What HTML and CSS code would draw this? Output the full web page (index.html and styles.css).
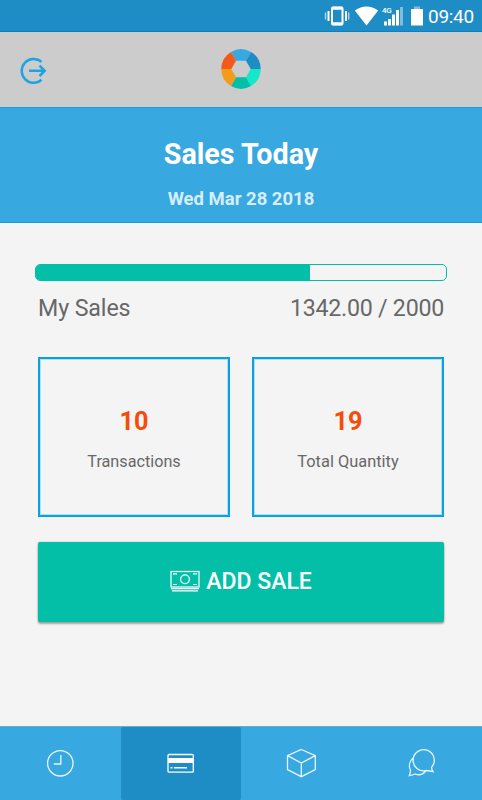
FILE: index.html
```html
<!DOCTYPE html>
<html lang="en">
<head>
<meta charset="utf-8">
<title>Sales Today</title>
<link rel="stylesheet" href="styles.css">
</head>
<body>
<div class="app">
  <div class="status">
    <svg class="status-icons" width="112" height="32" viewBox="312 0 112 32">
      <rect x="332" y="7.5" width="10.5" height="17" rx="1" fill="none" stroke="#fff" stroke-width="2"/>
      <path d="M332 8.2h10.500M332 23.800h10.500" stroke="#fff" stroke-width="3"/>
      <path d="M328.500 11v10M346 11v10" stroke="#fff" stroke-width="2"/>
      <path d="M325.500 12.500v7M348.700 12.500v7" stroke="#b9dcee" stroke-width="1.300"/>
      <path d="M366.500 25.500 354.800 10.500Q366.500 2.500 378.200 10.500Z" fill="#fff"/>
      <path d="M384 21.500h3v4h-3zM388 19h3v6.500h-3zM392 14.500h3v11h-3zM396 10h3v15.500h-3z" fill="#fff"/>
      <path d="M400 7h3v18.500h-3z" fill="#7fbddf"/>
      <path d="M411 9h12v16.500h-12z" fill="#fff"/>
      <path d="M414 6.500h6v2.500h-6z" fill="#7fbddf"/>
      <text x="382" y="13" class="network">4G</text>
    </svg>
    <span class="time">09:40</span>
  </div>
  <header class="topbar">
    <svg class="exit" width="28" height="28" viewBox="19 57 28 28" fill="none" stroke="#20a3e2" stroke-width="2.500">
      <path d="M41.500 61.900A11.900 11.900 0 1 0 41.500 79.700M29 70.800H44.500M39.500 65.600l5.200 5.200-5.200 5.200"/>
    </svg>
    <svg class="logo" width="42" height="42" viewBox="-21 -21 42 42">
      <path d="M-10-17A19.700 19.700 0 0 1 10-17L5-8.200H-5Z" fill="#37a8e0"/>
      <path d="M10-17A19.700 19.700 0 0 1 19.700 0H9.700L5-8.200Z" fill="#1e8dc6"/>
      <path d="M19.700 0A19.700 19.700 0 0 1 10 17L5 8.300 9.700 0Z" fill="#11e8cc"/>
      <path d="M10 17A19.700 19.700 0 0 1-10 17L-5 8.300H5Z" fill="#04bfa8"/>
      <path d="M-10 17A19.700 19.700 0 0 1-19.700 0H-9.700L-5 8.300Z" fill="#f39c1b"/>
      <path d="M-19.700 0A19.700 19.700 0 0 1-10-17L-5-8.200-9.700 0Z" fill="#f25a19"/>
    </svg>
  </header>
  <section class="hero">
    <h1 class="title">Sales Today</h1>
    <p class="date">Wed Mar 28 2018</p>
  </section>
  <main class="content">
    <div class="progress"><div class="progress-fill"></div></div>
    <div class="summary"><span class="label">My Sales</span><span class="amount">1342.00 / 2000</span></div>
    <div class="cards">
      <div class="card"><strong class="count">10</strong><span class="caption">Transactions</span></div>
      <div class="card"><strong class="count">19</strong><span class="caption quantity">Total Quantity</span></div>
    </div>
    <button class="add">
      <svg width="30" height="22" viewBox="0 0 30 22" fill="none" stroke="#fff" stroke-width="1.200">
        <rect x="1" y="1.500" width="28" height="15.500"/>
        <circle cx="15" cy="9.200" r="4.400"/>
        <path d="M3 3.800h4M23 3.800h4M3 14.500h4M23 14.500h4M1 18.700h28M2 20.900h26"/>
      </svg>
      <span>ADD SALE</span>
    </button>
  </main>
  <nav class="tabs">
    <div class="tab">
      <svg width="30" height="30" viewBox="45 748 30 30"><circle cx="60.300" cy="763.300" r="12.700"/><path d="M60.800 755v9h-7"/></svg>
    </div>
    <div class="tab active">
      <svg width="30" height="30" viewBox="166 748 30 30"><rect x="168" y="754.500" width="25.300" height="17.700" rx="1"/><path d="M168 760.500h25.300" stroke-width="5"/><path d="M170.500 767.700h2M174 767.700h13" stroke-width="1.400"/></svg>
    </div>
    <div class="tab">
      <svg width="30" height="30" viewBox="286 748 30 30"><path d="M301.300 749.500 315.300 755.600V769.700L301.300 776.700 287.500 769.700V755.600ZM287.500 755.600 301.300 763 315.300 755.600M301.300 763V776.700"/></svg>
    </div>
    <div class="tab">
      <svg width="30" height="30" viewBox="407.500 748 30 30"><path d="M432.200 767.200A10.600 10.600 0 1 0 427 770.500Q430 771 433.500 771.700 432 769.500 432.200 767.200ZM413.300 758.300A10 10 0 0 0 411 770.200Q411 773.500 409.800 775.700 413 775.200 415.500 774Q422 776.500 426.200 771"/></svg>
    </div>
  </nav>
</div>
</body>
</html>
```
FILE: styles.css
```css
* { box-sizing: border-box; }
body { margin: 0; font-family: Roboto, sans-serif; }
.app { width: 482px; height: 800px; display: flex; flex-direction: column; background: #f4f4f4; overflow: hidden; }
.status { height: 32px; background: #1e8dc6; border-bottom: 1px solid #0e80bd; display: flex; justify-content: flex-end; align-items: flex-start; padding-right: 8px; color: #fff; }
.status-icons { margin-right: 4px; }
.network { font: 500 8px Roboto, sans-serif; fill: #fff; letter-spacing: -.3px; }
.time { width: 46px; white-space: nowrap; font-size: 19px; line-height: 34px; letter-spacing: -.3px; }
.topbar { height: 75px; background: #ccc; display: grid; grid-template-columns: 1fr 42px 1fr; align-items: center; }
.exit { margin-left: 18.500px; margin-top: 3px; }
.logo { margin-top: -1px; }
.hero { height: 116px; background: #37a8e0; border-top: 1px solid #159fe0; border-bottom: 1px solid #109ee0; text-align: center; color: #fff; padding-top: 29px; }
.title { margin: 0; font-size: 28.700px; line-height: 34px; font-weight: 700; }
.date { margin: 17px 0 0; font-size: 18.5px; line-height: 22px; font-weight: 700; color: #d7eefa; }
.content { flex: 1; padding: 41px 38px 0; color: #686868; }
.progress { height: 17px; margin: 0 -3px; border: 1px solid #04bfa8; border-radius: 5px; overflow: hidden; }
.progress-fill { width: 66.800%; height: 100%; background: #04bfa8; }
.summary { display: flex; justify-content: space-between; height: 28px; line-height: 28px; margin-top: 13px; font-size: 23.200px; }
.label { letter-spacing: -.1px; }
.amount { letter-spacing: -.25px; }
.cards { display: grid; grid-template-columns: 1fr 1fr; gap: 22px; margin-top: 35px; }
.card { height: 160px; border: 2px solid #07a2e2; outline: 1px solid #b5dcf0; outline-offset: -3px; display: flex; flex-direction: column; align-items: center; padding-top: 48px; }
.count { font-size: 25.300px; line-height: 30px; font-weight: 700; color: #f64c0b; }
.caption { margin-top: 14px; font-size: 16.200px; line-height: 22px; }
.quantity { font-size: 16.400px; }
.add { width: 100%; height: 80px; margin: 25px 0 0; padding: 0 0 1px; border: 0; border-radius: 2px; background: #04bfa8; box-shadow: 0 2px 2px rgba(0,0,0,.3), 0 0 2px rgba(0,0,0,.25); color: #fff; display: flex; align-items: center; justify-content: center; gap: 6px; font: 500 23px Roboto, sans-serif; }
.add svg { margin-bottom: 2px; }
.tabs { height: 74px; display: grid; grid-template-columns: repeat(4, 1fr); background: #37a8e0; border-top: 1px solid #66aed0; }
.tab { display: flex; align-items: center; justify-content: center; padding-bottom: 2px; }
.tab svg { fill: none; stroke: #e9f7ff; stroke-width: 1.300; }
.tab.active { background: #1e8dc6; border-radius: 2px; }
.tab.active svg { stroke: #fff; }
```
